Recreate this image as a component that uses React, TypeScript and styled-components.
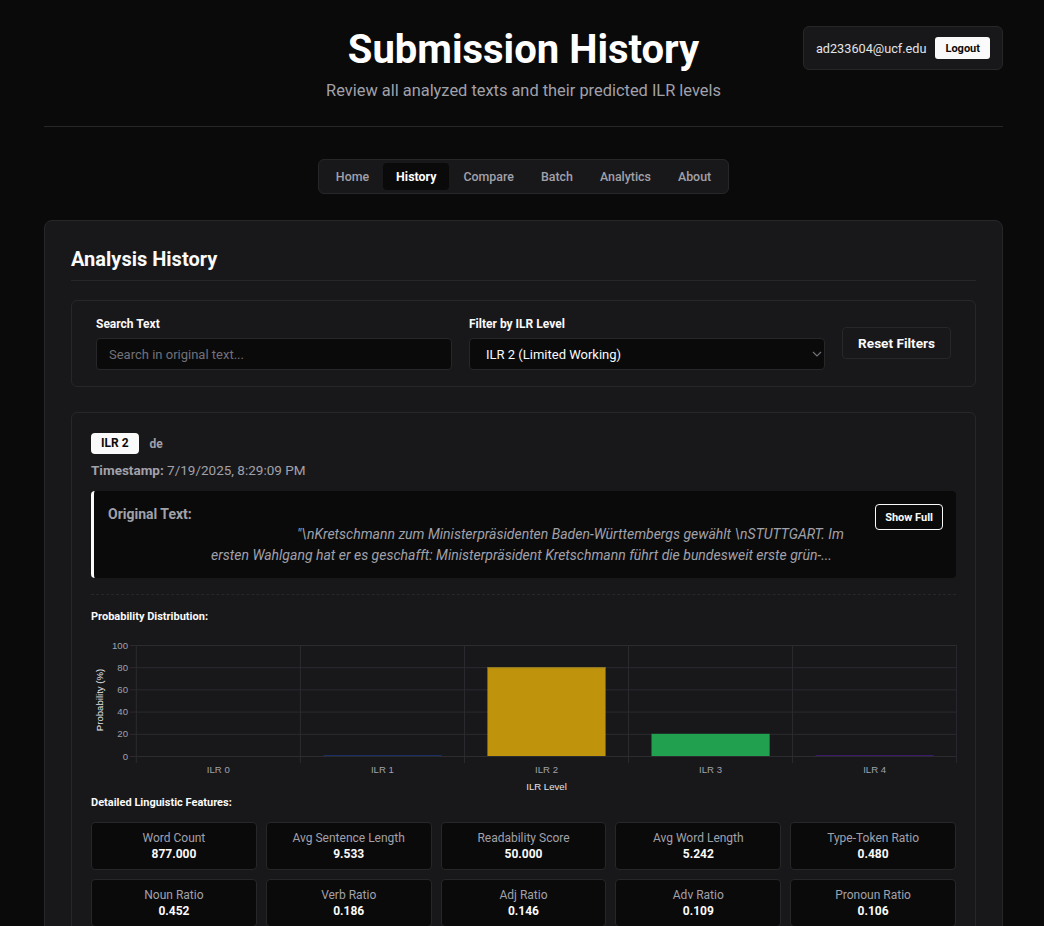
import React from 'react';
import styled, { createGlobalStyle } from 'styled-components';

const GlobalStyle = createGlobalStyle`
  html, body { margin: 0; padding: 0; background: #0a0a0a; }
  html { scrollbar-width: none; }
  html::-webkit-scrollbar, body::-webkit-scrollbar { display: none; }
  body { font-family: Roboto, "Noto Sans", sans-serif; color: #fafafa; }
  * { box-sizing: border-box; }
`;

const Page = styled.div`
  padding: 0 41px 40px 44px;
`;

const Header = styled.header`
  position: relative;
  text-align: center;
  padding: 26px 0 23px;
  border-bottom: 1px solid #27272a;
`;

const Title = styled.h1`
  margin: 0;
  font-size: 40px;
  line-height: 48px;
  font-weight: 700;
  color: #ffffff;
`;

const Subtitle = styled.p`
  margin: 5px 0 0;
  font-size: 16.4px;
  line-height: 24px;
  color: #a1a1aa;
`;

const UserBox = styled.div`
  position: absolute;
  top: 26px;
  right: 0;
  display: flex;
  align-items: center;
  gap: 9px;
  padding: 10px 12px;
  background: #18181b;
  border: 1px solid #27272a;
  border-radius: 6px;
`;

const Email = styled.span`
  font-size: 12.7px;
  color: #e4e4e7;
`;

const LogoutButton = styled.button`
  height: 22px;
  padding: 0 10px;
  background: #fafafa;
  color: #0a0a0a;
  border: none;
  border-radius: 3px;
  font-family: inherit;
  font-size: 11px;
  font-weight: 700;
  white-space: nowrap;
`;

const Nav = styled.nav`
  display: flex;
  gap: 1px;
  width: fit-content;
  margin: 32px auto 26px;
  padding: 3px 4px;
  background: #18181b;
  border: 1px solid #27272a;
  border-radius: 6px;
`;

const NavItem = styled.a<{ $active?: boolean }>`
  display: block;
  padding: 0 13px;
  line-height: 27px;
  font-size: 12.4px;
  font-weight: ${p => (p.$active ? 700 : 500)};
  color: ${p => (p.$active ? '#ffffff' : '#a1a1aa')};
  background: ${p => (p.$active ? '#0a0a0a' : 'transparent')};
  border-radius: 4px;
`;

const Card = styled.section`
  background: #18181b;
  border: 1px solid #27272a;
  border-radius: 8px;
  padding: 26px;
`;

const CardTitle = styled.h2`
  margin: 0;
  font-size: 20px;
  line-height: 24px;
  font-weight: 700;
  padding-bottom: 9px;
  border-bottom: 1px solid #27272a;
`;

const FilterBox = styled.div`
  margin-top: 19px;
  display: grid;
  grid-template-columns: 1fr 1fr auto;
  gap: 17px;
  align-items: center;
  padding: 15px 24px 16px;
  border: 1px solid #27272a;
  border-radius: 6px;
`;

const Field = styled.label`
  display: flex;
  flex-direction: column;
  gap: 6px;
`;

const FieldLabel = styled.span`
  font-size: 12px;
  line-height: 16px;
  font-weight: 700;
  color: #fafafa;
`;

const TextInput = styled.input`
  height: 32px;
  padding: 0 12px;
  background: #0a0a0a;
  border: 1px solid #27272a;
  border-radius: 4px;
  font-family: inherit;
  font-size: 13px;
  color: #fafafa;
  &::placeholder { color: #71717a; }
`;

const SelectWrap = styled.div`
  position: relative;
`;

const Select = styled.select`
  width: 100%;
  height: 32px;
  padding: 0 16px;
  appearance: none;
  background: #0a0a0a;
  border: 1px solid #27272a;
  border-radius: 4px;
  font-family: inherit;
  font-size: 13px;
  color: #fafafa;
`;

const Chevron = styled.svg`
  position: absolute;
  right: 3px;
  top: 13px;
  pointer-events: none;
`;

const ResetButton = styled.button`
  height: 32px;
  padding: 0 15px;
  background: #18181b;
  border: 1px solid #27272a;
  border-radius: 4px;
  color: #fafafa;
  font-family: inherit;
  font-size: 13.6px;
  font-weight: 700;
  white-space: nowrap;
`;

const Entry = styled.article`
  margin-top: 25px;
  padding: 20px 19px;
  border: 1px solid #27272a;
  border-radius: 6px;
`;

const MetaRow = styled.div`
  display: flex;
  align-items: center;
  gap: 11px;
`;

const Badge = styled.span`
  display: inline-block;
  height: 21px;
  padding: 0 10px;
  line-height: 21px;
  background: #fafafa;
  color: #0a0a0a;
  border-radius: 4px;
  font-size: 12px;
  font-weight: 700;
`;

const Lang = styled.span`
  font-size: 12px;
  font-weight: 700;
  color: #a1a1aa;
`;

const Timestamp = styled.p`
  margin: 6px 0 0;
  font-size: 13.5px;
  line-height: 20px;
  color: #a1a1aa;
  strong { font-weight: 700; }
`;

const OriginalBox = styled.div`
  margin-top: 11px;
  display: flex;
  justify-content: space-between;
  align-items: flex-start;
  padding: 13px 13px 12px 14px;
  background: #0a0a0a;
  border-left: 3px solid #fafafa;
  border-radius: 4px;
`;

const OriginalLabel = styled.div`
  font-size: 14px;
  line-height: 20px;
  font-weight: 700;
  color: #a1a1aa;
`;

const QuoteLine = styled.div<{ $indent: number }>`
  padding-left: ${p => p.$indent}px;
  font-size: 14px;
  line-height: 21px;
  font-style: italic;
  white-space: nowrap;
  color: #a1a1aa;
`;

const ShowFullButton = styled.button`
  height: 26px;
  padding: 0 9px;
  background: #0a0a0a;
  border: 1px solid #fafafa;
  border-radius: 4px;
  color: #fafafa;
  font-family: inherit;
  font-size: 11px;
  font-weight: 700;
  white-space: nowrap;
`;

const ChartSection = styled.div`
  margin-top: 16px;
  padding-top: 14px;
  border-top: 1px dashed #27272a;
`;

const SectionHeading = styled.h4`
  margin: 0;
  font-size: 11px;
  line-height: 16px;
  font-weight: 700;
  color: #fafafa;
`;

const ChartSvg = styled.svg`
  display: block;
  font-family: "Liberation Sans", Arial, sans-serif;
`;

const FeatureGrid = styled.div`
  margin-top: 11px;
  display: grid;
  grid-template-columns: repeat(5, 1fr);
  gap: 9px;
`;

const FeatureCell = styled.div`
  padding: 7px 8px;
  background: #0a0a0a;
  border: 1px solid #27272a;
  border-radius: 4px;
  text-align: center;
`;

const FeatureLabel = styled.div`
  font-size: 12px;
  line-height: 16px;
  color: #a1a1aa;
`;

const FeatureValue = styled.div`
  font-size: 12px;
  line-height: 16px;
  font-weight: 700;
  color: #fafafa;
`;

const features: [string, string][] = [
  ['Word Count', '877.000'],
  ['Avg Sentence Length', '9.533'],
  ['Readability Score', '50.000'],
  ['Avg Word Length', '5.242'],
  ['Type-Token Ratio', '0.480'],
  ['Noun Ratio', '0.452'],
  ['Verb Ratio', '0.186'],
  ['Adj Ratio', '0.146'],
  ['Adv Ratio', '0.109'],
  ['Pronoun Ratio', '0.106'],
];

const bars = [
  { label: 'ILR 0', value: 0, fill: '#1e3a8a' },
  { label: 'ILR 1', value: 0.6, fill: '#1e3a8a' },
  { label: 'ILR 2', value: 80, fill: '#bf930c' },
  { label: 'ILR 3', value: 20, fill: '#21a150' },
  { label: 'ILR 4', value: 0.6, fill: '#4c1d95' },
];

function Chart() {
  const left = 45.3;
  const right = 865.7;
  const cw = (right - left) / 5;
  const base = 131;
  const scale = 1.11;
  const y = (v: number) => base - v * scale;
  const ticks = [0, 20, 40, 60, 80, 100];
  return (
    <ChartSvg width={866} height={170} viewBox="0 0 866 170">
      {ticks.map(t => (
        <g key={t}>
          <line x1={39} x2={right} y1={y(t) + 0.5} y2={y(t) + 0.5} stroke="#2b2b30" strokeWidth={1} />
          <text x={37} y={y(t) + 3.5} textAnchor="end" fontSize={9.6} fill="#a1a1aa">{t}</text>
        </g>
      ))}
      {[0, 1, 2, 3, 4, 5].map(i => (
        <line key={i} x1={left + i * cw} x2={left + i * cw} y1={y(100)} y2={138} stroke="#2b2b30" strokeWidth={1} />
      ))}
      {bars.map((b, i) => {
        const w = cw * 0.72;
        const x = left + i * cw + (cw - w) / 2;
        const h = Math.max(b.value * scale, 0);
        return (
          <g key={b.label}>
            {h > 0 && <rect x={x} y={base - h} width={w} height={h} fill={b.fill} />}
            <text x={left + i * cw + cw / 2} y={148} textAnchor="middle" fontSize={9.6} fill="#a1a1aa">{b.label}</text>
          </g>
        );
      })}
      <rect x={left + 2 * cw + (cw - cw * 0.72) / 2} y={y(80)} width={cw * 0.72} height={1} fill="#8f7a28" />
      <text x={(left + right) / 2} y={165} textAnchor="middle" fontSize={9.6} fill="#e4e4e7">ILR Level</text>
      <text transform="translate(12 75) rotate(-90)" textAnchor="middle" fontSize={9.6} fill="#e4e4e7">Probability (%)</text>
    </ChartSvg>
  );
}

export default function App() {
  return (
    <>
      <GlobalStyle />
      <Page>
        <Header>
          <Title>Submission History</Title>
          <Subtitle>Review all analyzed texts and their predicted ILR levels</Subtitle>
          <UserBox>
            <Email>ad233604@ucf.edu</Email>
            <LogoutButton>Logout</LogoutButton>
          </UserBox>
        </Header>

        <Nav>
          <NavItem>Home</NavItem>
          <NavItem $active>History</NavItem>
          <NavItem>Compare</NavItem>
          <NavItem>Batch</NavItem>
          <NavItem>Analytics</NavItem>
          <NavItem>About</NavItem>
        </Nav>

        <Card>
          <CardTitle>Analysis History</CardTitle>

          <FilterBox>
            <Field>
              <FieldLabel>Search Text</FieldLabel>
              <TextInput placeholder="Search in original text..." />
            </Field>
            <Field as="div">
              <FieldLabel>Filter by ILR Level</FieldLabel>
              <SelectWrap>
                <Select defaultValue="2">
                  <option value="2">ILR 2 (Limited Working)</option>
                </Select>
                <Chevron width="10" height="6" viewBox="0 0 10 6">
                  <polyline points="1,1 5,5 9,1" fill="none" stroke="#71717a" strokeWidth="1.2" />
                </Chevron>
              </SelectWrap>
            </Field>
            <ResetButton>Reset Filters</ResetButton>
          </FilterBox>

          <Entry>
            <MetaRow>
              <Badge>ILR 2</Badge>
              <Lang>de</Lang>
            </MetaRow>
            <Timestamp>
              <strong>Timestamp:</strong> 7/19/2025, 8:29:09 PM
            </Timestamp>

            <OriginalBox>
              <div>
                <OriginalLabel>Original Text:</OriginalLabel>
                <QuoteLine $indent={189}>"\nKretschmann zum Ministerpräsidenten Baden-Württembergs gewählt \nSTUTTGART. Im</QuoteLine>
                <QuoteLine $indent={103}>ersten Wahlgang hat er es geschafft: Ministerpräsident Kretschmann führt die bundesweit erste grün-...</QuoteLine>
              </div>
              <ShowFullButton>Show Full</ShowFullButton>
            </OriginalBox>

            <ChartSection>
              <SectionHeading>Probability Distribution:</SectionHeading>
              <Chart />
              <SectionHeading>Detailed Linguistic Features:</SectionHeading>
              <FeatureGrid>
                {features.map(([label, value]) => (
                  <FeatureCell key={label}>
                    <FeatureLabel>{label}</FeatureLabel>
                    <FeatureValue>{value}</FeatureValue>
                  </FeatureCell>
                ))}
              </FeatureGrid>
            </ChartSection>
          </Entry>
        </Card>
      </Page>
    </>
  );
}
